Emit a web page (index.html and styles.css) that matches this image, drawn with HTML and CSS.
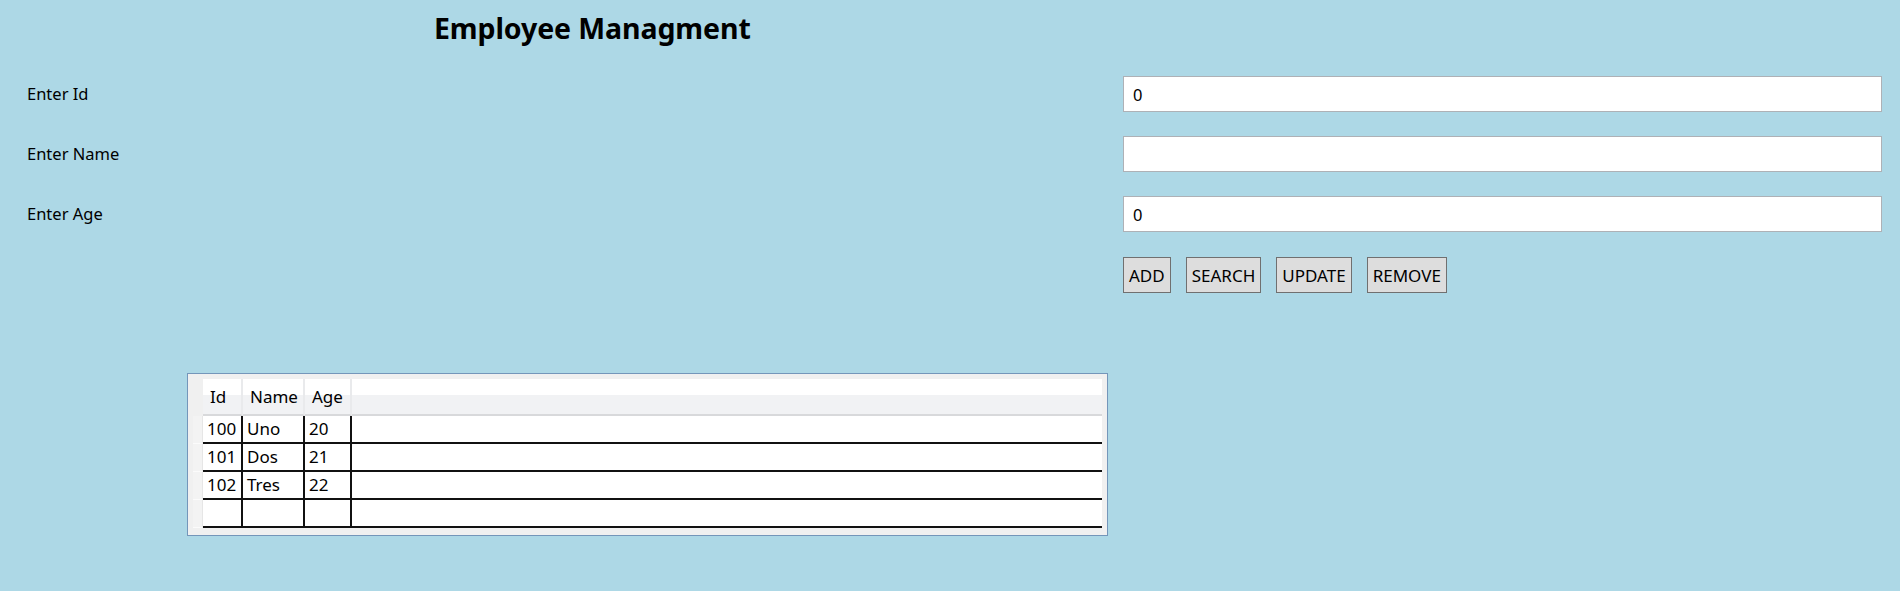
FILE: index.html
```html
<!DOCTYPE html>
<html>
<head>
<meta charset="utf-8">
<title>Employee Managment</title>
<link rel="stylesheet" href="styles.css">
</head>
<body>
<div class="window">
  <h1 class="title">Employee Managment</h1>
  <div class="form">
    <label class="label">Enter Id</label>
    <input class="field" type="text" value="0">
    <label class="label">Enter Name</label>
    <input class="field" type="text" value="">
    <label class="label">Enter Age</label>
    <input class="field" type="text" value="0">
    <div class="spacer"></div>
    <div class="buttons">
      <button class="btn">ADD</button>
      <button class="btn">SEARCH</button>
      <button class="btn">UPDATE</button>
      <button class="btn">REMOVE</button>
    </div>
  </div>
  <div class="grid-frame">
    <div class="grid">
      <div class="hcorner"></div>
      <div class="hcell">Id</div>
      <div class="hcell">Name</div>
      <div class="hcell">Age</div>
      <div class="hcell hfill"></div>

      <div class="rh"></div>
      <div class="cell">100</div>
      <div class="cell">Uno</div>
      <div class="cell">20</div>
      <div class="cell fill"></div>

      <div class="rh"></div>
      <div class="cell">101</div>
      <div class="cell">Dos</div>
      <div class="cell">21</div>
      <div class="cell fill"></div>

      <div class="rh"></div>
      <div class="cell">102</div>
      <div class="cell">Tres</div>
      <div class="cell">22</div>
      <div class="cell fill"></div>

      <div class="rh"></div>
      <div class="cell"></div>
      <div class="cell"></div>
      <div class="cell"></div>
      <div class="cell fill"></div>
    </div>
  </div>
</div>
</body>
</html>
```

FILE: styles.css
```css
html, body {
  margin: 0;
  padding: 0;
  background: #add8e6;
}

.window {
  width: 1900px;
  height: 591px;
  font-family: "Noto Sans", "Open Sans", sans-serif;
  color: #000;
}

.title {
  margin: 0;
  height: 76px;
  box-sizing: border-box;
  padding: 10px 0 0 434px;
  font-size: 28.5px;
  line-height: 36px;
  font-weight: 700;
  letter-spacing: -0.1px;
}

.form {
  display: grid;
  grid-template-columns: 1096px 759px;
  grid-auto-rows: 36px;
  row-gap: 24px;
  padding-left: 27px;
}

.label {
  font-size: 16.5px;
  line-height: 36px;
  align-self: center;
}

.field {
  box-sizing: border-box;
  width: 759px;
  height: 36px;
  margin: 0;
  border: 1.5px solid #aeb1b6;
  background: #fff;
  padding: 0 9px;
  font-family: inherit;
  font-size: 16.5px;
  color: #000;
  outline: none;
}

.buttons {
  display: flex;
  gap: 15px;
  padding-top: 1px;
}

.btn {
  box-sizing: border-box;
  height: 36px;
  margin: 0;
  padding: 0 5px;
  border: 1.5px solid #707070;
  border-radius: 0;
  background: #dddddd;
  font-family: inherit;
  font-size: 17px;
  color: #000;
}

.grid-frame {
  margin: 81px 0 0 187px;
  width: 921px;
  height: 163px;
  box-sizing: border-box;
  border: 1px solid #7496ba;
  background: #f0f0f0;
  padding: 5px 5px 6px 5px;
}

.grid {
  display: grid;
  grid-template-columns: 10px 40px 62px 47px 1fr;
  grid-template-rows: 37px repeat(4, 28px);
  background: #fff;
  width: 909px;
}

.hcorner {
  background: #f0f0f0;
}

.hcell {
  box-sizing: border-box;
  background: linear-gradient(#ffffff 0%, #ffffff 45%, #f1f2f4 46%, #f1f2f4 100%);
  border-right: 2px solid #e9eaec;
  border-bottom: 2px solid #d8d9db;
  font-size: 17px;
  line-height: 36px;
  padding-left: 7px;
}

.hcell.hfill {
  border-right: none;
}

.rh {
  background: #f3f3f3;
  border-bottom: 1px solid #fbfbfb;
  border-right: 1px solid #e6e6e6;
}

.cell {
  box-sizing: border-box;
  border-right: 2px solid #111;
  border-bottom: 2px solid #111;
  font-size: 17px;
  line-height: 26px;
  padding-left: 4px;
  white-space: nowrap;
}

.cell.fill {
  border-right: none;
}
```
